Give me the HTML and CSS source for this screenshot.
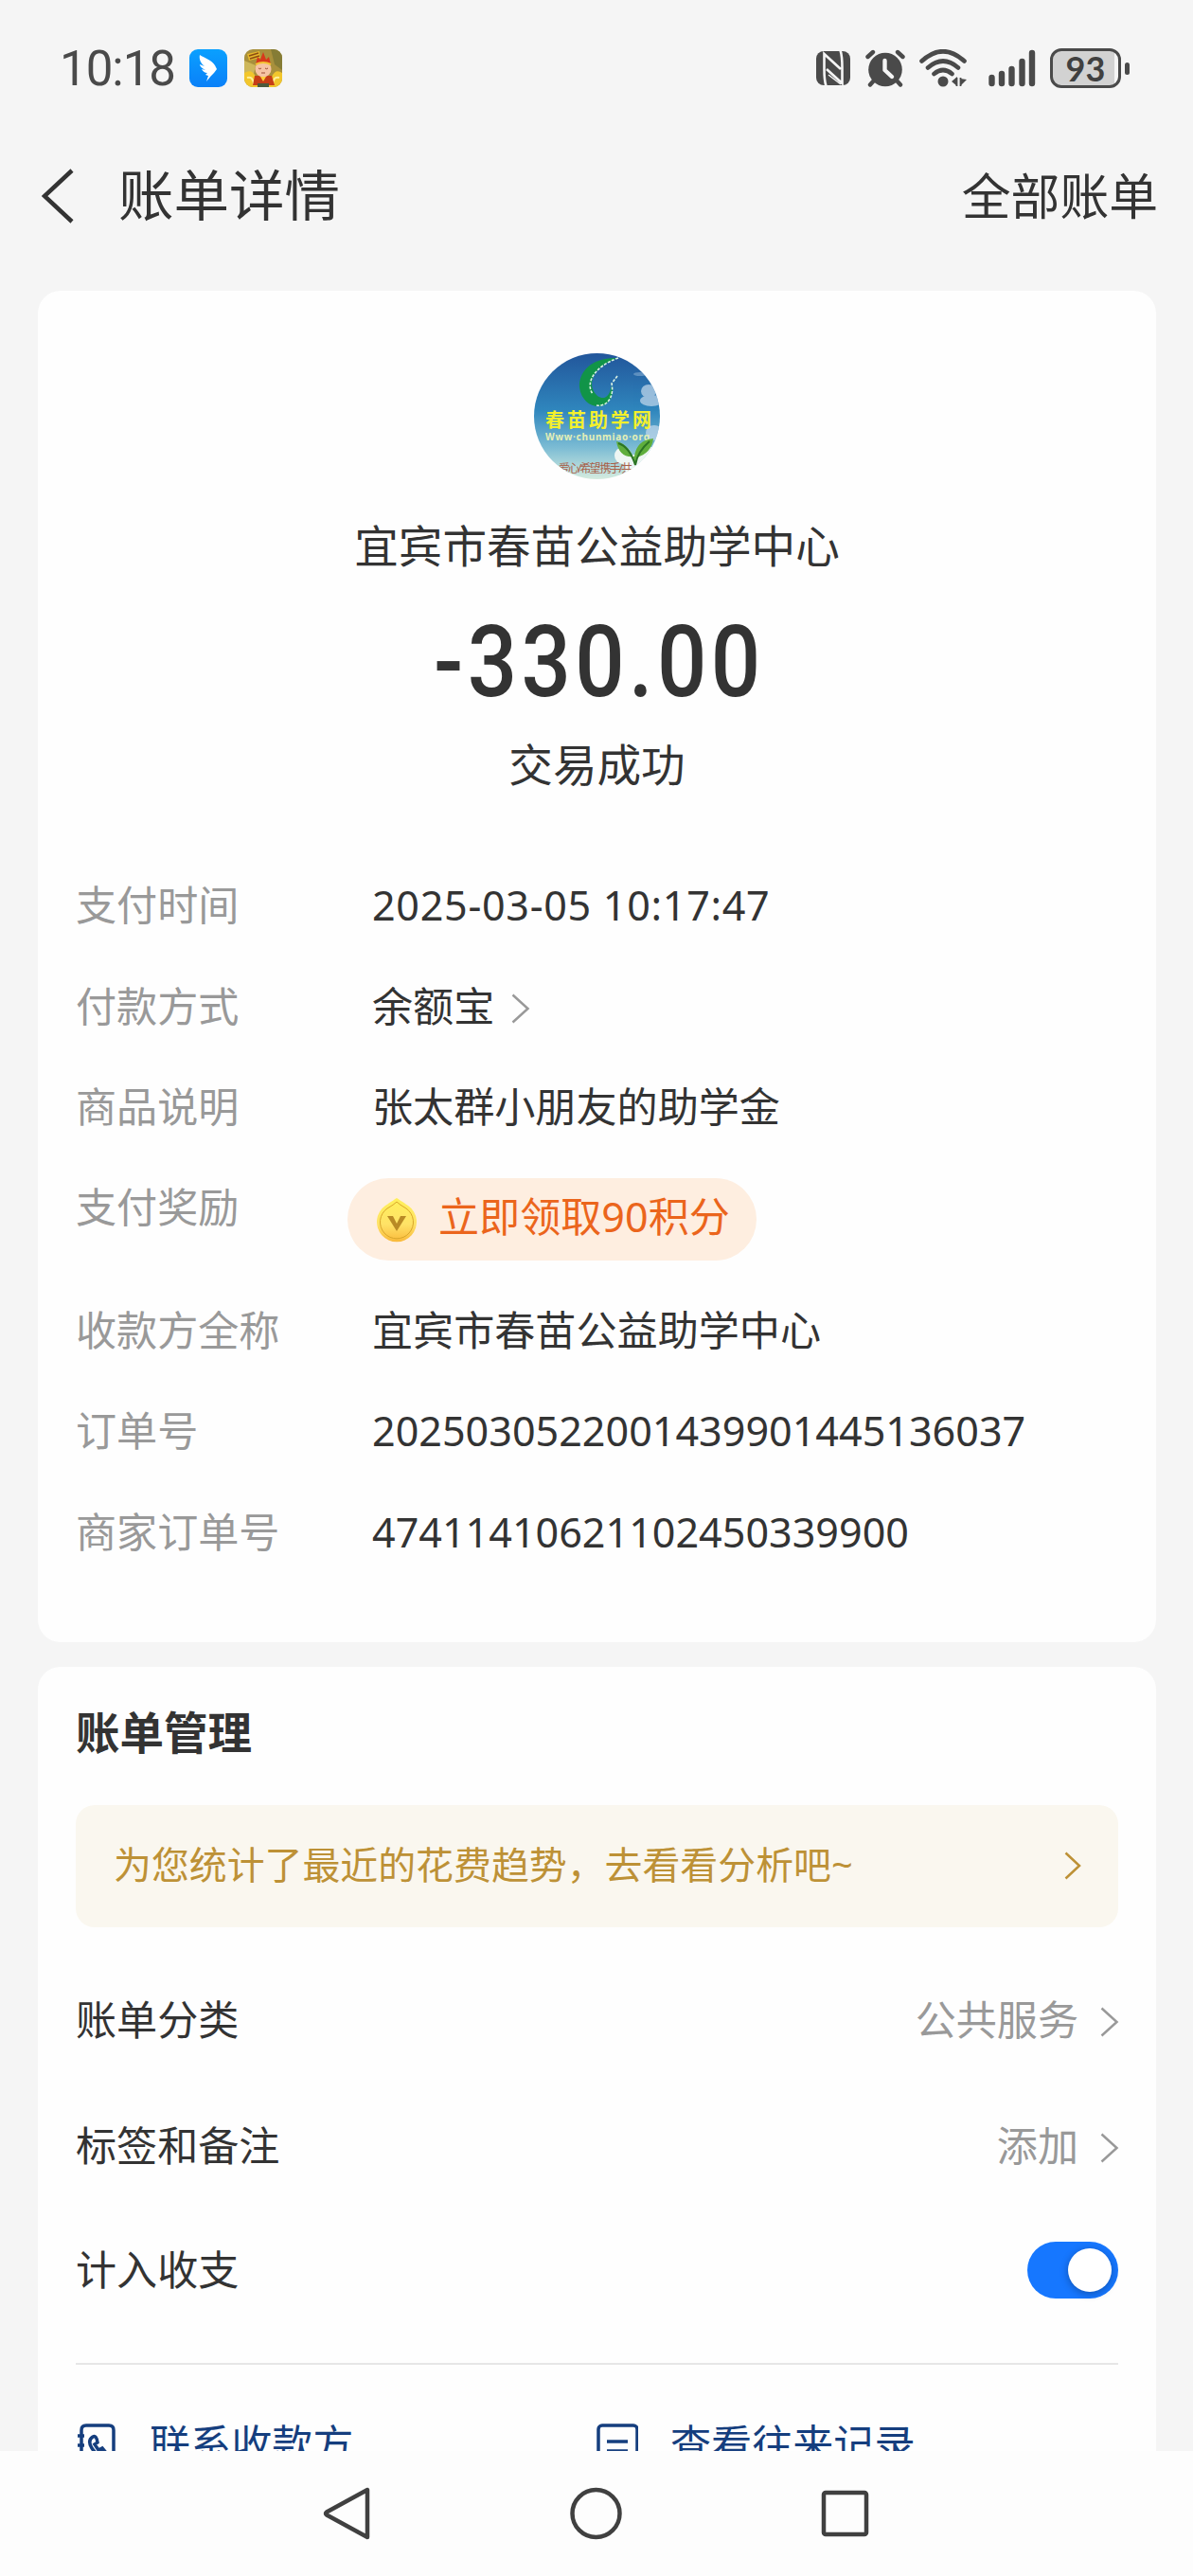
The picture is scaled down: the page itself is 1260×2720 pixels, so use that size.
FILE: index.html
```
<!DOCTYPE html>
<html lang="zh">
<head>
  <meta charset="UTF-8" />
  <meta name="viewport" content="width=device-width, initial-scale=1.0" />
  <title>账单详情</title>
  <link rel="stylesheet" href="styles.css">
</head>
<body>
  <div class="screen">
    <div class="status-bar">
      <span class="time">10:18</span>
      <svg class="app-icon" width="40" height="40" viewBox="0 0 40 40">
        <defs>
          <linearGradient id="blue" x1="0" y1="0" x2="0" y2="1">
            <stop offset="0" stop-color="#0aa0ff" />
            <stop offset="1" stop-color="#0a80f8" />
          </linearGradient>
        </defs>
        <rect width="40" height="40" rx="9" fill="url(#blue)" />
        <path d="M11 6C16 9 24 12 27 17L29 21L26 25L23 28L18 34L20 28L17 27L19 25C16 25 14 23 13 21L17 22C13 20 11 18 11 16L16 18C12 15 10 10 11 6Z" fill="#fff" />
      </svg>
      <svg class="app-icon-game" width="40" height="40" viewBox="0 0 40 40">
        <defs>
          <clipPath id="gameClip"><rect width="40" height="40" rx="9" /></clipPath>
        </defs>
        <g clip-path="url(#gameClip)">
          <rect width="40" height="40" fill="#a8903c" />
          <path d="M28 0H40V22L32 16Z" fill="#857c35" />
          <path d="M0 12L12 17L10 26L0 25Z" fill="#cdb75b" />
          <path d="M0 25Q8 20 12 29L29 29Q33 20 40 25V40H0Z" fill="#f2c62c" />
          <path d="M3 30Q9 28 10 37M37 30Q31 28 30 37" fill="none" stroke="#fff09a" stroke-width="2" />
          <path d="M3 5L16 2L17 9L5 12Z" fill="#e6b82c" />
          <path d="M5 7L15 4M6 10L16 7" stroke="#8b4d12" stroke-width="1.4" />
          <path d="M11 28H29L32 38H9Z" fill="#c63d16" />
          <circle cx="20" cy="21" r="8.5" fill="#f6c3a4" />
          <path d="M12 16L14 8L17 11L20 3L23 11L26 8L28 16Q20 12 12 16Z" fill="#d8381b" />
          <path d="M12 16Q20 12 28 16" fill="none" stroke="#f3c437" stroke-width="2" />
          <path d="M15 20Q16.500 21.500 18 20M22 20Q23.500 21.500 25 20M18 25H22" fill="none" stroke="#9d4b35" stroke-width="1" />
          <path d="M17 29L20 34L23 29Z" fill="#ffcf3a" />
          <rect x="14" y="36" width="12" height="4" fill="#4c5a3c" />
        </g>
      </svg>

      <svg class="nfc" width="36" height="38" viewBox="0 0 36 38">
        <rect y="1" width="36" height="36" rx="8" fill="#4a4a4a" />
        <path d="M10.500 38Q8.500 32 8.500 20V4L26 20M25.500 0Q27.500 6 27.500 18V35L11 20" fill="none" stroke="#f5f5f5" stroke-width="2.600" />
        <path d="M13 26L26 36" stroke="#f5f5f5" stroke-width="1.500" />
      </svg>
      <svg class="alarm" width="42" height="40" viewBox="0 0 42 40">
        <circle cx="21" cy="21.500" r="17.800" fill="#4a4a4a" />
        <path d="M2.500 8L8 3M39.500 8L34 3M9 33L5 37.500M33 33L37 37.500" stroke="#4a4a4a" stroke-width="4.400" stroke-linecap="round" />
        <path d="M20.500 12V22L28 29" fill="none" stroke="#f5f5f5" stroke-width="4.400" stroke-linecap="round" stroke-linejoin="round" />
      </svg>
      <svg class="wifi" width="50" height="40" viewBox="0 0 50 40">
        <path d="M2.500 12.500Q25-8 47.500 12.500M9 19.500Q25 5.500 41 19.500M15.500 26Q25 18 34.500 26" fill="none" stroke="#4a4a4a" stroke-width="4.600" stroke-linecap="round" />
        <circle cx="25" cy="34" r="5.500" fill="#4a4a4a" />
        <path d="M34 34L40 29V39ZM50 32L43 39V31Z" fill="#4a4a4a" />
        <path d="M39.500 30V39M43.500 30V39" stroke="#4a4a4a" stroke-width="1.800" />
      </svg>
      <svg class="signal" width="50" height="40" viewBox="0 0 50 40">
        <path d="M3.500 30V36M14 26V36M24.500 21V36M35.500 13V36M46 4V36" stroke="#4a4a4a" stroke-width="6.400" stroke-linecap="round" />
      </svg>
      <div class="battery"><span>93</span></div>
      <i class="battery-tip"></i>
    </div>

    <div class="header">
      <svg class="back" width="34" height="58" viewBox="0 0 34 58">
        <path d="M32 2L3 29L32 56" fill="none" stroke="#333" stroke-width="4.500" />
      </svg>
      <h1>账单详情</h1>
      <a class="all-bills">全部账单</a>
    </div>

    <div class="card">
      <svg class="avatar" width="133" height="133" viewBox="0 0 133 133">
        <defs>
          <linearGradient id="sky" x1="0" y1="0" x2="0" y2="1">
            <stop offset="0" stop-color="#22569b" />
            <stop offset="0.450" stop-color="#2f86bd" />
            <stop offset="0.750" stop-color="#7cbcd4" />
            <stop offset="1" stop-color="#d5ecdf" />
          </linearGradient>
          <clipPath id="avatarClip"><circle cx="66.500" cy="66.500" r="66.500" /></clipPath>
        </defs>
        <g clip-path="url(#avatarClip)">
          <rect width="133" height="133" fill="url(#sky)" />
          <g fill="#c6dbed" opacity="0.7">
            <ellipse cx="121" cy="40" rx="8" ry="7" />
            <ellipse cx="124" cy="50" rx="12" ry="6" />
            <ellipse cx="112" cy="22" rx="7" ry="2" opacity="0.5" />
            <ellipse cx="127" cy="84" rx="9" ry="8" />
          </g>
          <g fill="#eef6f3">
            <circle cx="94" cy="108" r="9" />
            <circle cx="107" cy="119" r="12" />
            <circle cx="123" cy="110" r="11" />
          </g>
          <path d="M89 5C60 4 47 20 48 36C50 50 60 57 70 56C80 54 85 44 82 34C80 46 74 50 67 45C55 34 61 14 89 5Z" fill="#119448" />
          <path d="M89 5C63 14 54 32 62 43M88 24L82 32C85 46 77 57 66 55" fill="none" stroke="#d9f1e4" stroke-width="1.600" stroke-dasharray="3 1.500" />
          <text class="avatar-name" x="12" y="78" textLength="112">春苗助学网</text>
          <text class="avatar-url" x="12" y="92" textLength="110">Www·chunmiao·org</text>
          <path d="M107 118Q103 97 87 93Q90 111 106 109Q108 92 126 90Q124 106 108 110" fill="#5fae3c" />
          <path d="M89 95Q101 99 107 118Q109 104 122 93" fill="none" stroke="#2b7424" stroke-width="2" />
          <text class="avatar-slogan" x="26" y="126" textLength="78">爱心/希望 携手/共</text>
        </g>
      </svg>
      <div class="merchant">宜宾市春苗公益助学中心</div>
      <div class="amount"><span>-330.00</span></div>
      <div class="result">交易成功</div>

      <div class="details">
        <div class="row">
          <span class="label">支付时间</span>
          <span class="value date">2025-03-05 10:17:47</span>
        </div>
        <div class="row">
          <span class="label">付款方式</span>
          <span class="value">余额宝</span>
          <svg class="chevron pay" width="20" height="32" viewBox="0 0 20 32"><path d="M1.500 1.500L17.500 16L1.500 30.500" /></svg>
        </div>
        <div class="row">
          <span class="label">商品说明</span>
          <span class="value">张太群小朋友的助学金</span>
        </div>
        <div class="row reward">
          <span class="label">支付奖励</span>
          <div class="points">
            <svg width="44" height="48" viewBox="0 0 44 48">
              <defs>
                <linearGradient id="coin" x1="0" y1="0" x2="0" y2="1">
                  <stop offset="0" stop-color="#fff05a" />
                  <stop offset="0.600" stop-color="#ffe267" />
                  <stop offset="1" stop-color="#f9b93a" />
                </linearGradient>
              </defs>
              <path d="M22 1Q25 3 34 9A21 21 0 1 1 10 9Q19 3 22 1Z" fill="url(#coin)" />
              <path d="M22 5Q25 8 32 12A17.500 17.500 0 1 1 12 12Q19 8 22 5Z" fill="none" stroke="#d9a62b" stroke-width="1" />
              <path d="M12 20H18L22 28L26 20H32L22 36Z" fill="#b98a25" />
            </svg>
            <span>立即领取90积分</span>
          </div>
        </div>
        <div class="row">
          <span class="label">收款方全称</span>
          <span class="value">宜宾市春苗公益助学中心</span>
        </div>
        <div class="row">
          <span class="label">订单号</span>
          <span class="value">2025030522001439901445136037</span>
        </div>
        <div class="row">
          <span class="label">商家订单号</span>
          <span class="value">47411410621102450339900</span>
        </div>
      </div>
    </div>

    <div class="card manage">
      <h2>账单管理</h2>
      <div class="banner">
        <span>为您统计了最近的花费趋势，去看看分析吧~</span>
        <svg class="chevron gold" width="18" height="30" viewBox="0 0 18 30"><path d="M1.500 1.500L16 15L1.500 28.500" /></svg>
      </div>
      <div class="item">
        <span>账单分类</span>
        <span class="item-value">公共服务</span>
        <svg class="chevron" width="20" height="32" viewBox="0 0 20 32"><path d="M1.500 1.500L17.500 16L1.500 30.500" /></svg>
      </div>
      <div class="item">
        <span>标签和备注</span>
        <span class="item-value">添加</span>
        <svg class="chevron" width="20" height="32" viewBox="0 0 20 32"><path d="M1.500 1.500L17.500 16L1.500 30.500" /></svg>
      </div>
      <div class="item last">
        <span>计入收支</span>
        <div class="switch"><i></i></div>
      </div>
      <div class="actions">
        <a>
          <svg width="44" height="44" viewBox="0 0 44 44">
            <path d="M6 11V7Q6 2 11 2H35Q40 2 40 7V37Q40 42 35 42H11Q6 42 6 37V11M2 13H9M2 23H9M2 33H9" />
            <path d="M18 14Q12 18 17 26Q24 37 33 32L28 26L24 28L20 22L23 20Q22 12 18 14Z" />
          </svg>
          <span>联系收款方</span>
        </a>
        <a>
          <svg width="44" height="44" viewBox="0 0 44 44">
            <rect x="2" y="2" width="41" height="40" rx="4" />
            <path d="M11 19H33M11 29H33" />
          </svg>
          <span>查看往来记录</span>
        </a>
      </div>
    </div>
  </div>

  <div class="nav-bar">
    <svg width="56" height="60" viewBox="0 0 56 60"><path d="M49 5V55L6 31.500Q4 30 6 28.500Z" /></svg>
    <svg width="60" height="60" viewBox="0 0 60 60"><circle cx="29.500" cy="30" r="25" /></svg>
    <svg width="56" height="60" viewBox="0 0 56 60"><rect x="5" y="8" width="45" height="44" rx="2" /></svg>
  </div>
</body>
</html>
```
FILE: styles.css
```
* {
  box-sizing: border-box;
}
body {
  margin: 0;
  height: 2720px;
  display: flex;
  flex-direction: column;
  font-family: "Noto Sans", "Noto Sans CJK SC", sans-serif;
  font-size: 43.1px;
  line-height: 60px;
  color: #333;
  background-color: #f5f5f5;
}
svg {
  display: block;
  flex-shrink: 0;
}
.screen {
  height: 2588px;
  overflow: hidden;
}

/* 状态栏 */
.status-bar {
  height: 144px;
  padding-left: 63px;
  display: flex;
  align-items: center;
}
.time {
  width: 137px;
  margin-top: 2px;
  font-family: Roboto, sans-serif;
  font-size: 51px;
  letter-spacing: -1px;
  color: #4a4a4a;
}
.app-icon-game {
  margin-left: 18px;
}
.nfc {
  margin-left: 564px;
}
.alarm {
  margin-left: 16px;
}
.wifi {
  margin-left: 15px;
}
.signal {
  margin-left: 23px;
}
.battery {
  width: 75px;
  height: 42px;
  margin-left: 15px;
  border: 3px solid #4a4a4a;
  border-radius: 12px;
  background: linear-gradient(90deg, #d2d2d2 65px, #f5f5f5 65px);
  font-family: Lato, sans-serif;
  font-size: 36px;
  font-weight: bold;
  line-height: 36px;
  text-align: center;
  color: #404040;
}
.battery-tip {
  width: 5px;
  height: 13px;
  margin-left: 4px;
  border-radius: 3px;
  background: #4a4a4a;
}

/* 标题栏 */
.header {
  height: 126px;
  padding: 0 37px 0 44px;
  display: flex;
  align-items: center;
}
h1 {
  margin: 0 auto 5px 47px;
  font-size: 58.5px;
  font-weight: normal;
}
.all-bills {
  font-size: 51.8px;
}

.card {
  margin: 37px 39px 0 40px;
  padding: 66px 40px 63px;
  border-radius: 24px;
  background: #fefefe;
}
.avatar {
  margin: 0 auto;
}
.avatar-name {
  font-size: 20px;
  font-weight: bold;
  fill: #f4f02c;
}
.avatar-url {
  font-size: 10px;
  font-weight: bold;
  fill: #e3efb6;
}
.avatar-slogan {
  font-size: 12px;
  fill: #a8604a;
}
.merchant,
.result {
  font-size: 46.6px;
  text-align: center;
}
.merchant {
  margin-top: 40px;
}
.amount {
  height: 100px;
  margin: 42px 0 29px;
  font-family: Roboto, sans-serif;
  font-size: 106px;
  font-weight: 500;
  line-height: 102px;
  text-align: center;
}
.amount span {
  display: inline-block;
  margin-right: -5px;
  letter-spacing: 5px;
  transform: scaleX(0.87);
}

.details {
  margin-top: 66px;
}
.row {
  height: 106.4px;
  display: flex;
  align-items: center;
}
.label {
  width: 313px;
  color: #999;
}
.date {
  letter-spacing: 0.7px;
}
.chevron {
  fill: none;
  stroke: #999;
  stroke-width: 2.5;
}
.chevron.pay {
  margin: 5px 0 0 18px;
}
.reward {
  height: 129.4px;
  align-items: flex-start;
  line-height: 106px;
}
.points {
  width: 432px;
  height: 87px;
  margin: 22px 0 0 -26px;
  padding-left: 30px;
  display: flex;
  align-items: center;
  border-radius: 44px;
  background: #feeee0;
  color: #eb651c;
}
.points span {
  margin: -6px 0 0 22px;
}

/* 账单管理 */
.manage {
  height: 960px;
  margin-top: 26px;
  padding-top: 39px;
}
h2 {
  margin: 0;
  font-size: 46.5px;
  font-weight: bold;
}
.banner {
  height: 129px;
  margin: 47px 0 32px;
  padding: 0 39px 0 40px;
  display: flex;
  align-items: center;
  justify-content: space-between;
  border-radius: 20px;
  background: #faf7ef;
  font-size: 39.9px;
  color: #bd9136;
}
.banner span {
  margin-top: -3px;
}
.gold {
  stroke: #bd9136;
}
.item {
  height: 133px;
  display: flex;
  align-items: center;
}
.item-value {
  margin-left: auto;
  color: #999;
}
.item .chevron {
  margin: 4px -1px 0 23px;
}
.item.last {
  height: 128px;
}
.switch {
  width: 96px;
  height: 60px;
  margin-left: auto;
  padding: 7px;
  border-radius: 30px;
  background: #1677ff;
}
.switch i {
  display: block;
  width: 46px;
  height: 46px;
  margin-left: auto;
  border-radius: 50%;
  background: #fff;
  box-shadow: 0 2px 8px rgba(0, 0, 0, 0.3);
}
.actions {
  margin-top: 34px;
  padding-top: 54px;
  display: flex;
  border-top: 2px solid #e6e6e6;
  color: #153e7e;
}
.actions a {
  width: 550px;
  display: flex;
  align-items: center;
}
.actions svg {
  margin-right: 34px;
  fill: none;
  stroke: #153e7e;
  stroke-width: 3.5;
}

.nav-bar {
  height: 132px;
  display: flex;
  align-items: center;
  justify-content: center;
  gap: 205px;
  background: #fdfdfd;
}
.nav-bar svg {
  fill: none;
  stroke: #404040;
  stroke-width: 4.5;
  stroke-linejoin: round;
}
```
